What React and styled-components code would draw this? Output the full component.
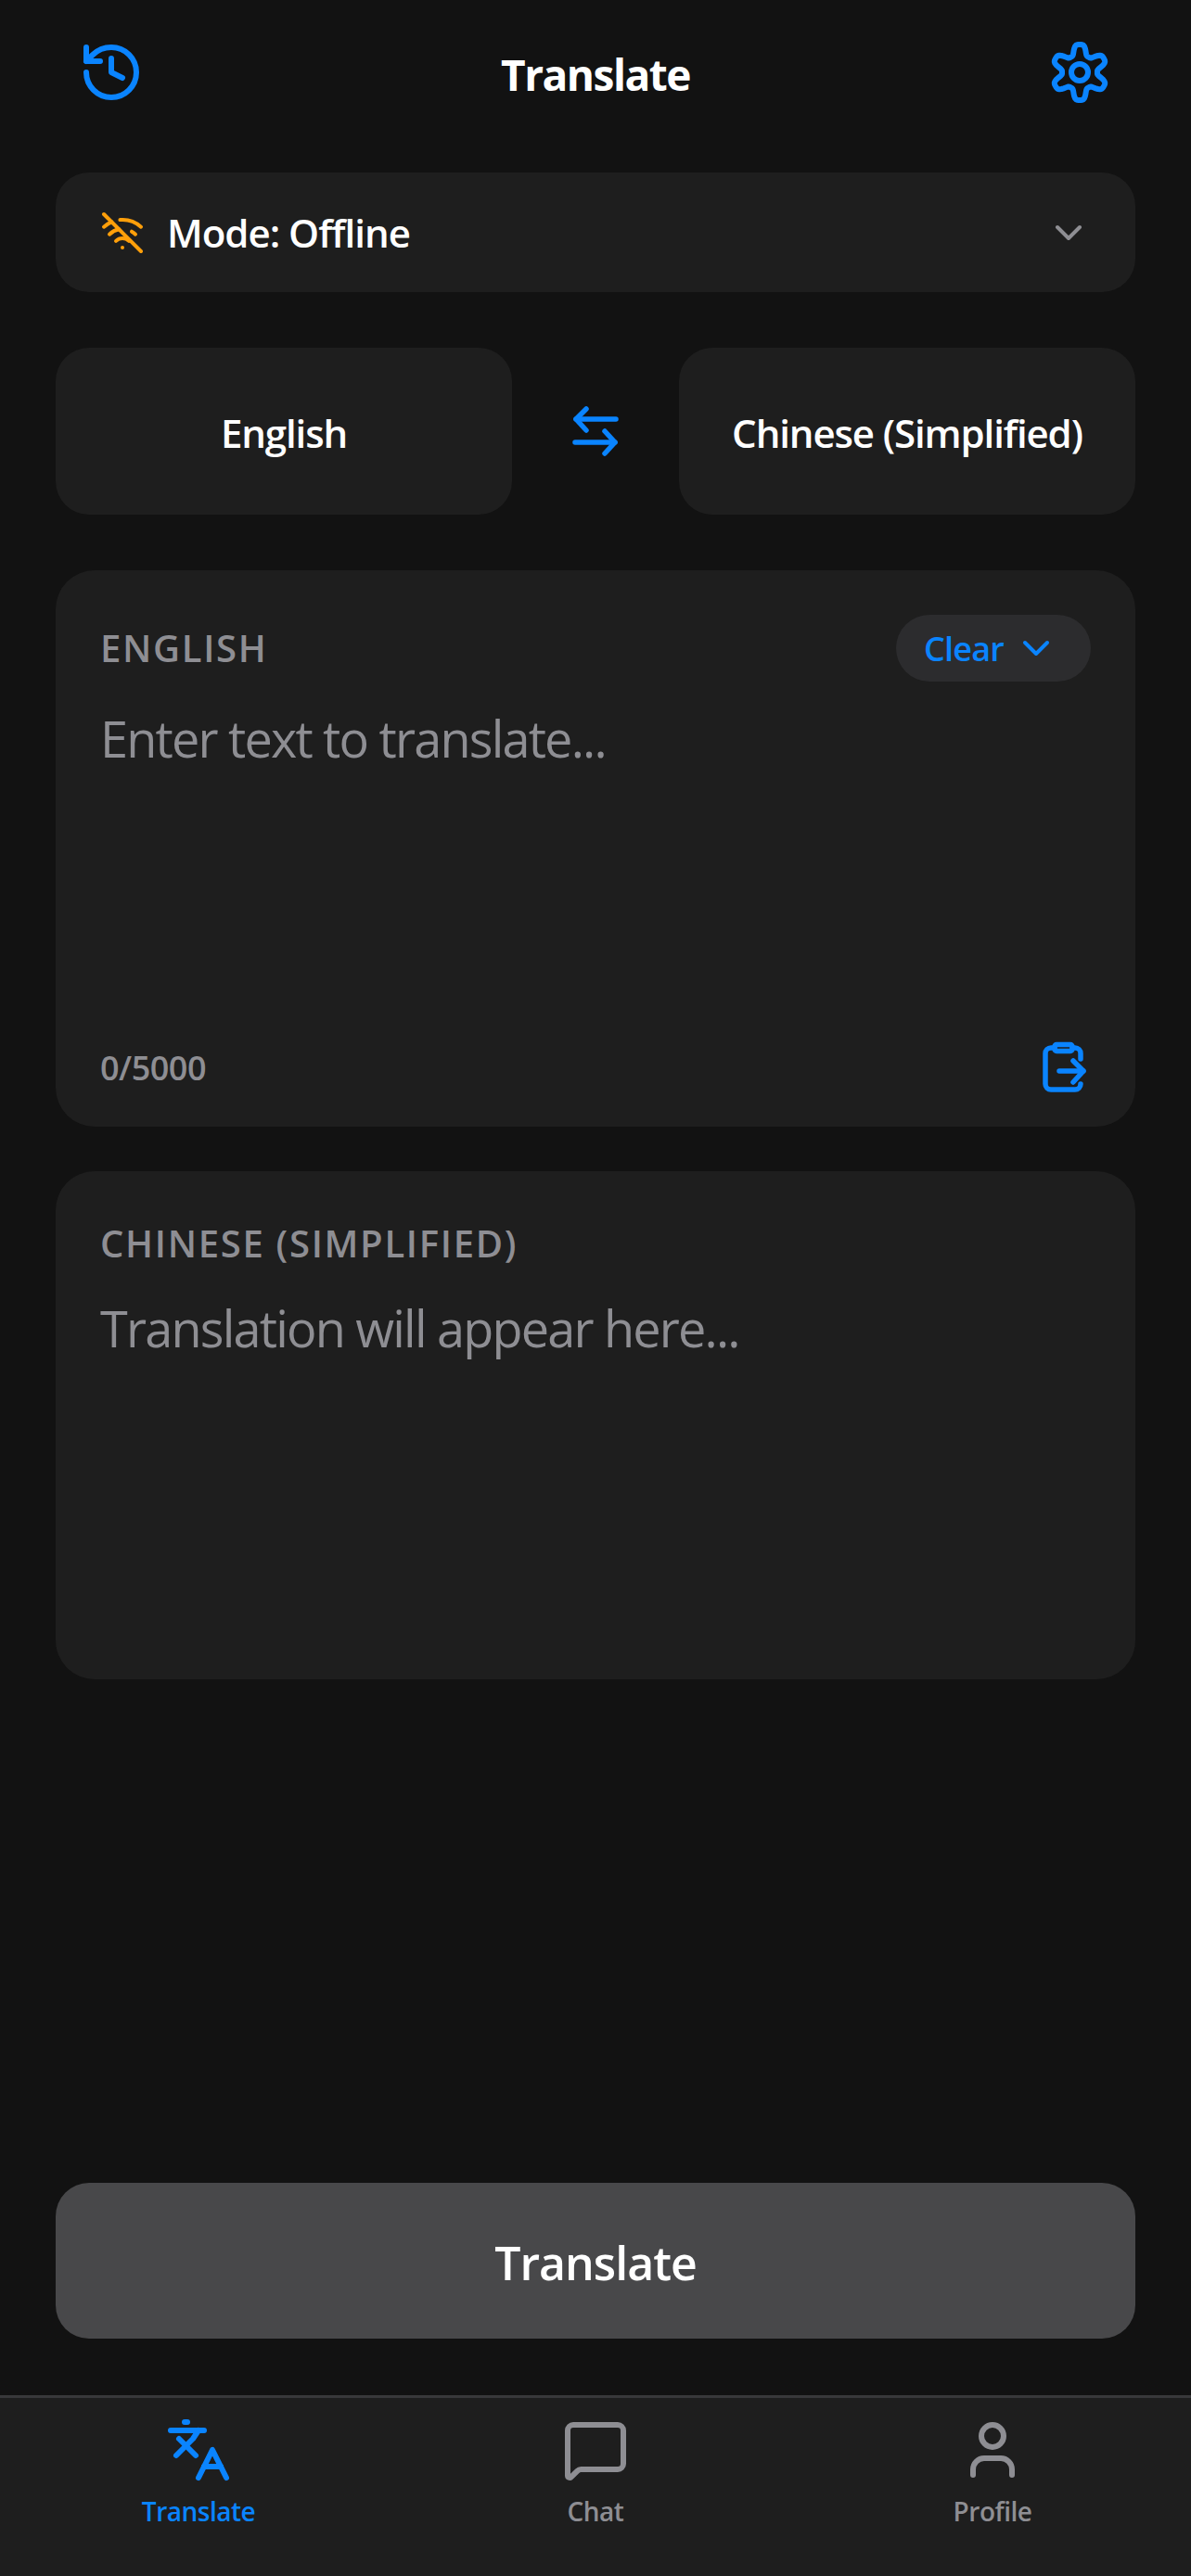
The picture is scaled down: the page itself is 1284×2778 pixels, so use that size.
import React from 'react';
import styled, { createGlobalStyle } from 'styled-components';
import {
  ChevronDown,
  History,
  Languages,
  MessageSquare,
  User,
  WifiOff
} from 'lucide-react';

const GlobalStyle = createGlobalStyle`
  html, body {
    margin: 0;
    padding: 0;
    background: #121212;
  }
  * {
    box-sizing: border-box;
  }
`;

const tabs = [
  { label: 'Translate', Icon: Languages, active: true },
  { label: 'Chat', Icon: MessageSquare },
  { label: 'Profile', Icon: User }
];

// six round lobes around the centre, one of them pointing straight up
const gearOutline = () => {
  const points = [];
  for (let i = 0; i < 144; i += 1) {
    const angle = (i / 144) * Math.PI * 2;
    const wave = Math.cos(6 * angle) - 0.12 * Math.cos(18 * angle);
    const radius = 24.5 + 6.25 * wave;
    const x = 36 + radius * Math.sin(angle);
    const y = 36 - radius * Math.cos(angle);
    points.push(`${x.toFixed(2)} ${y.toFixed(2)}`);
  }
  return `M${points.join('L')}Z`;
};

const GearIcon = () => (
  <svg width="72" height="72" viewBox="0 0 72 72" fill="none" stroke="currentColor" strokeWidth="6" strokeLinejoin="round">
    <path d={gearOutline()} />
    <circle cx="36" cy="36" r="9" />
  </svg>
);

const SwapIcon = () => (
  <svg width="50" height="54" viewBox="0 0 50 54" fill="none" stroke="currentColor" strokeWidth="5.5" strokeLinecap="round" strokeLinejoin="round">
    <path d="M4 14H47" />
    <path d="M15 3L4 14L15 26" />
    <path d="M3 39H46" />
    <path d="M35 27L46 39L35 51" />
  </svg>
);

const PasteGlyph = () => (
  <svg width="56" height="62" viewBox="0 0 56 62" fill="none" stroke="currentColor" strokeWidth="5.5" strokeLinecap="round" strokeLinejoin="round">
    <rect x="17" y="6.5" width="19" height="7" rx="2" />
    <path d="M45 22v-6a6 6 0 0 0-6-6h-3" />
    <path d="M17 10h-4a6 6 0 0 0-6 6v33a6 6 0 0 0 6 6h26a6 6 0 0 0 6-6" />
    <path d="M22 35H48" />
    <path d="M37 24L48 35L37 47" />
  </svg>
);

const App = () => (
  <Page>
    <GlobalStyle />
    <Header>
      <IconButton><History size={72} strokeWidth={2} /></IconButton>
      <Title>Translate</Title>
      <IconButton><GearIcon /></IconButton>
    </Header>
    <Main>
      <ModeBar>
        <ModeLabel>
          <WifiOff size={48} color="#ff9f0a" strokeWidth={2} />
          <span>Mode: Offline</span>
        </ModeLabel>
        <ChevronDown size={48} color="#8e8e93" strokeWidth={2} />
      </ModeBar>
      <LanguageRow>
        <LanguageBox>English</LanguageBox>
        <SwapButton><SwapIcon /></SwapButton>
        <LanguageBox>Chinese (Simplified)</LanguageBox>
      </LanguageRow>
      <InputCard>
        <CardHead>
          <CardLabel>ENGLISH</CardLabel>
          <ClearPill>
            <span>Clear</span>
            <ChevronDown size={48} strokeWidth={2} />
          </ClearPill>
        </CardHead>
        <Placeholder>Enter text to translate...</Placeholder>
        <CardFoot>
          <Counter>0/5000</Counter>
          <PasteIcon><PasteGlyph /></PasteIcon>
        </CardFoot>
      </InputCard>
      <OutputCard>
        <CardHead>
          <CardLabel>CHINESE (SIMPLIFIED)</CardLabel>
        </CardHead>
        <Placeholder>Translation will appear here...</Placeholder>
      </OutputCard>
      <TranslateButton>Translate</TranslateButton>
    </Main>
    <TabBar>
      {tabs.map(({ label, Icon, active }) => (
        <Tab key={label} $active={active}>
          <Icon size={72} strokeWidth={2} />
          <TabLabel>{label}</TabLabel>
        </Tab>
      ))}
    </TabBar>
  </Page>
);

const Page = styled.div`
  width: 1284px;
  height: 2778px;
  display: flex;
  flex-direction: column;
  background: #121212;
  color: #fff;
  font-family: 'Open Sans', 'Noto Sans', sans-serif;
`;

const Header = styled.header`
  height: 186px;
  flex: none;
  display: flex;
  align-items: flex-start;
  justify-content: space-between;
  padding: 42px 84px 0;
`;

const IconButton = styled.div`
  width: 72px;
  height: 72px;
  color: #0a84ff;
`;

const Title = styled.h1`
  margin: 11px 0 0;
  font-size: 46px;
  line-height: 54px;
  font-weight: 700;
  letter-spacing: -1.5px;
`;

const Main = styled.main`
  flex: 1;
  display: flex;
  flex-direction: column;
  padding: 0 60px 61px;
`;

const ModeBar = styled.div`
  height: 129px;
  flex: none;
  display: flex;
  align-items: center;
  justify-content: space-between;
  padding: 0 48px;
  border-radius: 36px;
  background: #1e1e1e;
`;

const ModeLabel = styled.div`
  display: flex;
  align-items: center;
  gap: 24px;
  font-size: 42px;
  font-weight: 600;
  letter-spacing: -1px;
`;

const LanguageRow = styled.div`
  display: grid;
  grid-template-columns: 492px 1fr 492px;
  height: 180px;
  flex: none;
  margin-top: 60px;
`;

const LanguageBox = styled.div`
  display: flex;
  align-items: center;
  justify-content: center;
  padding-top: 3px;
  border-radius: 36px;
  background: #1e1e1e;
  font-size: 42px;
  font-weight: 600;
  letter-spacing: -1.1px;
  white-space: nowrap;
`;

const SwapButton = styled.div`
  display: flex;
  align-items: center;
  justify-content: center;
  color: #0a84ff;
`;

const InputCard = styled.section`
  height: 600px;
  flex: none;
  display: flex;
  flex-direction: column;
  margin-top: 60px;
  padding: 48px 48px 33px;
  border-radius: 42px;
  background: #1e1e1e;
`;

const OutputCard = styled(InputCard)`
  height: 548px;
  margin-top: 48px;
`;

const CardHead = styled.div`
  display: flex;
  align-items: center;
  justify-content: space-between;
`;

const CardLabel = styled.div`
  font-size: 40px;
  line-height: 60px;
  font-weight: 600;
  letter-spacing: 1.7px;
  color: #8e8e93;
`;

const ClearPill = styled.div`
  width: 210px;
  height: 72px;
  display: flex;
  align-items: center;
  gap: 11px;
  padding-left: 30px;
  border-radius: 36px;
  background: #2c2c2e;
  color: #0a84ff;
  font-size: 36px;
  font-weight: 600;
  letter-spacing: -0.8px;
`;

const Placeholder = styled.div`
  margin-top: 25px;
  font-size: 54px;
  line-height: 72px;
  letter-spacing: -1.8px;
  color: #8e8e93;
`;

const CardFoot = styled.div`
  margin-top: auto;
  display: flex;
  align-items: center;
  justify-content: space-between;
`;

const Counter = styled.div`
  font-size: 36px;
  font-weight: 600;
  letter-spacing: -0.5px;
  color: #8e8e93;
`;

const PasteIcon = styled.div`
  height: 62px;
  color: #0a84ff;
`;

const TranslateButton = styled.button`
  height: 168px;
  flex: none;
  margin-top: auto;
  padding-top: 4px;
  border: 0;
  border-radius: 36px;
  background: #48484a;
  color: #fff;
  font-family: inherit;
  font-size: 50px;
  font-weight: 600;
  letter-spacing: -1px;
`;

const TabBar = styled.nav`
  height: 195px;
  flex: none;
  display: grid;
  grid-template-columns: repeat(3, 1fr);
  padding-top: 20px;
  border-top: 3px solid #38383a;
  background: #1e1e1e;
`;

const Tab = styled.div`
  display: flex;
  flex-direction: column;
  align-items: center;
  gap: 11px;
  color: ${props => (props.$active ? '#0a84ff' : '#8e8e93')};
`;

const TabLabel = styled.span`
  font-size: 28px;
  line-height: 38px;
  font-weight: 600;
  letter-spacing: -0.5px;
`;

export default App;
